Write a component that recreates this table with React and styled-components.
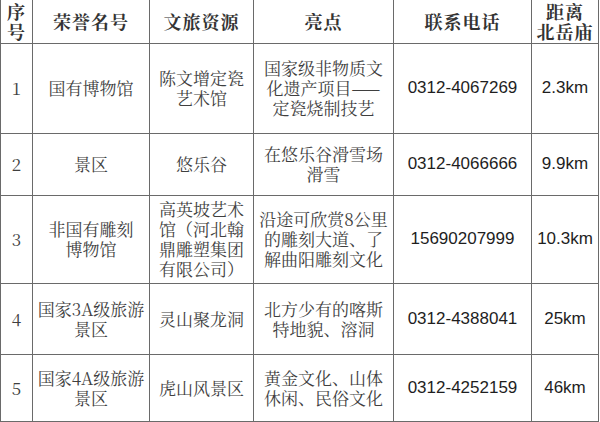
import React from 'react';
import styled, { createGlobalStyle } from 'styled-components';

const Global = createGlobalStyle`
	html, body {
		margin: 0;
		padding: 0;
		background: #fff;
	}
	body {
		width: 600px;
		height: 422px;
		overflow: hidden;
	}
`;

const SONG = `"Noto Serif CJK SC", "Liberation Serif", "Noto Sans CJK SC", serif`;
const ARIAL = `"Liberation Sans", Arial, sans-serif`;

const Table = styled.table`
	border-collapse: collapse;
	table-layout: fixed;
	width: 599px;
	color: #3a3a3a;
	font-family: ${SONG};
	font-size: 17px;
	line-height: 20px;
`;

const Row = styled.tr`
	height: ${p => p.h}px;
`;

const Head = styled.th`
	border: 1px solid #6a6a6a;
	border-top: none;
	padding: 0;
	font-weight: 700;
	font-size: 18px;
	line-height: 20px;
	letter-spacing: 1px;
	color: #333;
	text-align: center;
	vertical-align: middle;
`;

const Cell = styled.td`
	border: 1px solid #6a6a6a;
	padding: 0 2px;
	text-align: center;
	vertical-align: ${p => (p.top ? 'top' : 'middle')};
	padding-top: ${p => (p.top ? '3px' : '0')};
	font-family: ${p => (p.sans ? ARIAL : SONG)};
	color: ${p => (p.sans ? '#1e1e1e' : '#3f3f3f')};
	white-space: nowrap;
	overflow: hidden;
`;

const Lines = ({ text }) =>
	text.split('/').map((t, i, a) =>
		<React.Fragment key={i}>{t}{i < a.length - 1 && <br />}</React.Fragment>
	);

const rows = [
	{ h: 90, no: '1', name: '国有博物馆', res: '陈文增定瓷/艺术馆', hi: '国家级非物质文/化遗产项目——/定瓷烧制技艺', tel: '0312-4067269', dist: '2.3km' },
	{ h: 62, no: '2', name: '景区', res: '悠乐谷', hi: '在悠乐谷滑雪场/滑雪', tel: '0312-4066666', dist: '9.9km' },
	{ h: 88, no: '3', name: '非国有雕刻/博物馆', res: '高英坡艺术/馆（河北翰/鼎雕塑集团/有限公司）', hi: '沿途可欣赏8公里/的雕刻大道、了/解曲阳雕刻文化', tel: '15690207999', dist: '10.3km', top: true },
	{ h: 71, no: '4', name: '国家3A级旅游/景区', res: '灵山聚龙洞', hi: '北方少有的喀斯/特地貌、溶洞', tel: '0312-4388041', dist: '25km' },
	{ h: 67, no: '5', name: '国家4A级旅游/景区', res: '虎山风景区', hi: '黄金文化、山体/休闲、民俗文化', tel: '0312-4252159', dist: '46km' },
];

export default function App() {
	return (
		<>
			<Global />
			<Table>
				<colgroup>
					<col style={{ width: 32 }} />
					<col style={{ width: 117 }} />
					<col style={{ width: 104 }} />
					<col style={{ width: 140 }} />
					<col style={{ width: 138 }} />
					<col style={{ width: 67 }} />
				</colgroup>
				<thead>
					<Row h={43}>
						<Head>序<br />号</Head>
						<Head>荣誉名号</Head>
						<Head>文旅资源</Head>
						<Head>亮点</Head>
						<Head>联系电话</Head>
						<Head>距离<br />北岳庙</Head>
					</Row>
				</thead>
				<tbody>
					{rows.map(r =>
						<Row h={r.h} key={r.no}>
							<Cell>{r.no}</Cell>
							<Cell><Lines text={r.name} /></Cell>
							<Cell top={r.top}><Lines text={r.res} /></Cell>
							<Cell><Lines text={r.hi} /></Cell>
							<Cell sans>{r.tel}</Cell>
							<Cell sans>{r.dist}</Cell>
						</Row>
					)}
				</tbody>
			</Table>
		</>
	);
}
